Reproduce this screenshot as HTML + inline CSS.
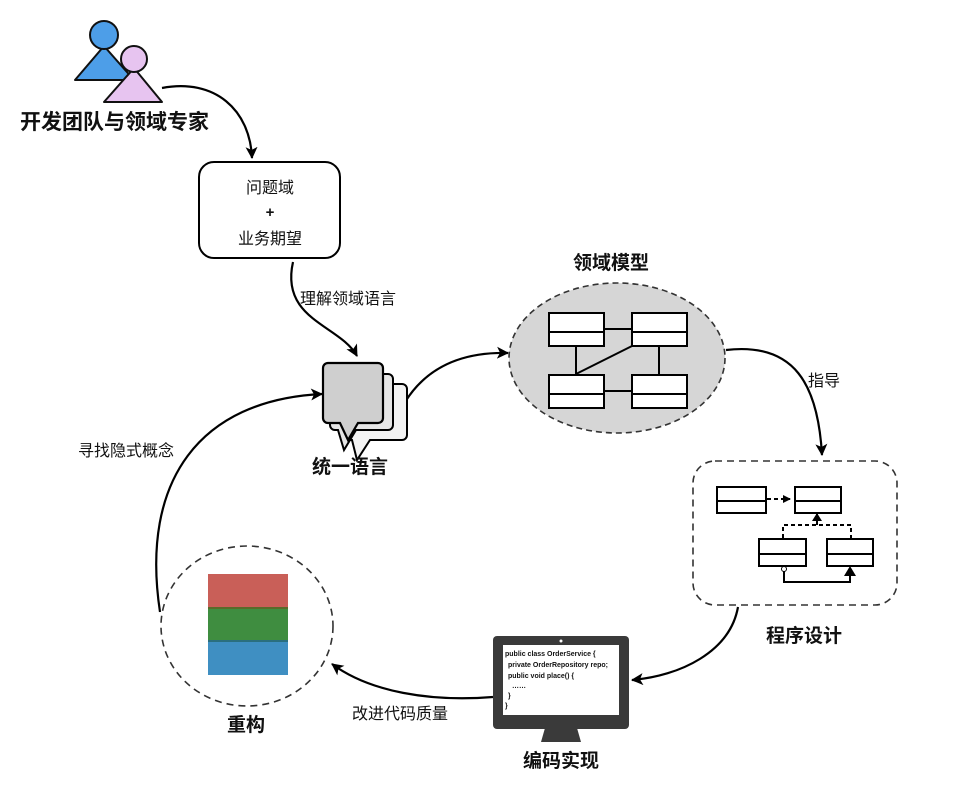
<!DOCTYPE html>
<html><head><meta charset="utf-8"><style>
html,body{margin:0;padding:0;background:#fff;}
svg{display:block}
text{font-family:"Liberation Sans","Noto Sans CJK SC",sans-serif;fill:#111}
.b{font-weight:bold}
</style></head><body>
<svg width="957" height="802" viewBox="0 0 957 802" xmlns="http://www.w3.org/2000/svg">
<defs>
<marker id="ar" markerWidth="14" markerHeight="14" refX="11" refY="6" orient="auto" markerUnits="userSpaceOnUse">
<path d="M0,0 L12,6 L0,12 L3,6 z" fill="#000"/></marker>
<marker id="ar2" markerWidth="8" markerHeight="8" refX="7" refY="4" orient="auto" markerUnits="userSpaceOnUse">
<path d="M0,0 L8,4 L0,8 z" fill="#000"/></marker>
</defs>
<!-- people -->
<path d="M104,46 L134,80 L75,80 Z" fill="#4d9ee8" stroke="#111" stroke-width="2" stroke-linejoin="round"/>
<circle cx="104" cy="35" r="14" fill="#4d9ee8" stroke="#111" stroke-width="2"/>
<path d="M134,68 L162,102 L104,102 Z" fill="#e7c4f0" stroke="#111" stroke-width="2" stroke-linejoin="round"/>
<circle cx="134" cy="59" r="13" fill="#e7c4f0" stroke="#111" stroke-width="2"/>
<text x="20" y="129" font-size="21" class="b">开发团队与领域专家</text>

<!-- arrows -->
<g fill="none" stroke="#000" stroke-width="2.2">
<path d="M162,88 C215,78 250,110 252,158" marker-end="url(#ar)"/>
<path d="M293,262 C280,320 340,325 357,356" marker-end="url(#ar)"/>
<path d="M405,402 C430,362 470,352 508,353" marker-end="url(#ar)"/>
<path d="M726,350 C795,342 818,385 822,455" marker-end="url(#ar)"/>
<path d="M738,607 C730,652 680,676 632,680" marker-end="url(#ar)"/>
<path d="M493,697 C430,702 370,692 332,664" marker-end="url(#ar)"/>
<path d="M160,612 C140,480 200,400 322,394" marker-end="url(#ar)"/>
</g>

<!-- problem box -->
<rect x="199" y="162" width="141" height="96" rx="15" fill="#fff" stroke="#000" stroke-width="2"/>
<text x="270" y="193" font-size="16" text-anchor="middle">问题域</text>
<text x="270" y="217" font-size="15" text-anchor="middle" class="b">+</text>
<text x="270" y="244" font-size="16" text-anchor="middle">业务期望</text>
<text x="300" y="304" font-size="16">理解领域语言</text>

<!-- bubbles -->
<path d="M354,384 h48 a5,5 0 0 1 5,5 v46 a5,5 0 0 1 -5,5 h-32 l-13,20 l-5,-20 h-3 a5,5 0 0 1 -5,-5 v-46 a5,5 0 0 1 5,-5z" fill="#f3f3f3" stroke="#000" stroke-width="2"/>
<path d="M340,374 h48 a5,5 0 0 1 5,5 v46 a5,5 0 0 1 -5,5 h-32 l-12,20 l-6,-20 h-3 a5,5 0 0 1 -5,-5 v-46 a5,5 0 0 1 5,-5z" fill="#e6e6e6" stroke="#000" stroke-width="2"/>
<path d="M328,363 h50 a5,5 0 0 1 5,5 v50 a5,5 0 0 1 -5,5 h-20 l-10,17 l-8,-17 h-12 a5,5 0 0 1 -5,-5 v-50 a5,5 0 0 1 5,-5z" fill="#cfcfcf" stroke="#000" stroke-width="2.2"/>
<text x="312" y="473" font-size="19" class="b">统一语言</text>

<!-- domain model -->
<text x="573" y="269" font-size="19" class="b">领域模型</text>
<ellipse cx="617" cy="358" rx="108" ry="75" fill="#d6d6d6" stroke="#333" stroke-width="1.6" stroke-dasharray="6,4"/>
<g stroke="#000" stroke-width="2">
<line x1="604" y1="329" x2="632" y2="329"/>
<line x1="576" y1="346" x2="576" y2="374"/>
<line x1="659" y1="346" x2="659" y2="374"/>
<line x1="576" y1="374" x2="632" y2="346"/>
<line x1="604" y1="391" x2="632" y2="391"/>
</g>
<g fill="#fff" stroke="#000" stroke-width="2">
<rect x="549" y="313" width="55" height="33"/><line x1="549" y1="332" x2="604" y2="332"/>
<rect x="632" y="313" width="55" height="33"/><line x1="632" y1="332" x2="687" y2="332"/>
<rect x="549" y="375" width="55" height="33"/><line x1="549" y1="394" x2="604" y2="394"/>
<rect x="632" y="375" width="55" height="33"/><line x1="632" y1="394" x2="687" y2="394"/>
</g>
<text x="808" y="386" font-size="16">指导</text>

<!-- program design -->
<rect x="693" y="461" width="204" height="144" rx="22" fill="#fff" stroke="#333" stroke-width="1.6" stroke-dasharray="7,5"/>
<g fill="none" stroke="#000" stroke-width="2">
<path d="M767,499 H790" stroke-dasharray="4,3" marker-end="url(#ar2)"/>
<path d="M783,538 V525 H851 V538 M817,525 V514" stroke-dasharray="4,3"/>
<path d="M784,570 V582 H850 V568" />
</g>
<path d="M812,521 L817,513 L822,521 Z" fill="#000"/>
<path d="M844,576 L850,566 L856,576 Z" fill="#000"/>
<circle cx="784" cy="569" r="2.5" fill="#fff" stroke="#000" stroke-width="1"/>
<g fill="#fff" stroke="#000" stroke-width="2">
<rect x="717" y="487" width="49" height="26"/><line x1="717" y1="501" x2="766" y2="501"/>
<rect x="795" y="487" width="46" height="26"/><line x1="795" y1="501" x2="841" y2="501"/>
<rect x="759" y="539" width="47" height="27"/><line x1="759" y1="554" x2="806" y2="554"/>
<rect x="827" y="539" width="46" height="27"/><line x1="827" y1="554" x2="873" y2="554"/>
</g>
<text x="766" y="642" font-size="19" class="b">程序设计</text>

<!-- monitor -->
<path d="M545,728 h32 l4,14 h-40z" fill="#3a3a3a"/>
<rect x="493" y="636" width="136" height="93" rx="4" fill="#3a3a3a"/>
<circle cx="561" cy="641" r="1.5" fill="#fff"/>
<rect x="503" y="645" width="116" height="70" fill="#fff"/>
<g font-size="7" font-weight="bold">
<text x="505" y="656">public class OrderService {</text>
<text x="508" y="667">private OrderRepository repo;</text>
<text x="508" y="678">public void place() {</text>
<text x="512" y="688">……</text>
<text x="508" y="698">}</text>
<text x="505" y="708">}</text>
</g>
<text x="523" y="767" font-size="19" class="b">编码实现</text>
<text x="352" y="719" font-size="16">改进代码质量</text>

<!-- refactor -->
<ellipse cx="247" cy="626" rx="86" ry="80" fill="#fff" stroke="#333" stroke-width="1.6" stroke-dasharray="7,5"/>
<rect x="208" y="574" width="80" height="34" fill="#c95f58"/>
<rect x="208" y="607" width="80" height="2" fill="#5a6a2a"/>
<rect x="208" y="609" width="80" height="32" fill="#3f8d40"/>
<rect x="208" y="640" width="80" height="2" fill="#2a6f7f"/>
<rect x="208" y="642" width="80" height="33" fill="#3f8fc2"/>
<text x="227" y="731" font-size="19" class="b">重构</text>
<text x="78" y="456" font-size="16">寻找隐式概念</text>
</svg>
</body></html>
